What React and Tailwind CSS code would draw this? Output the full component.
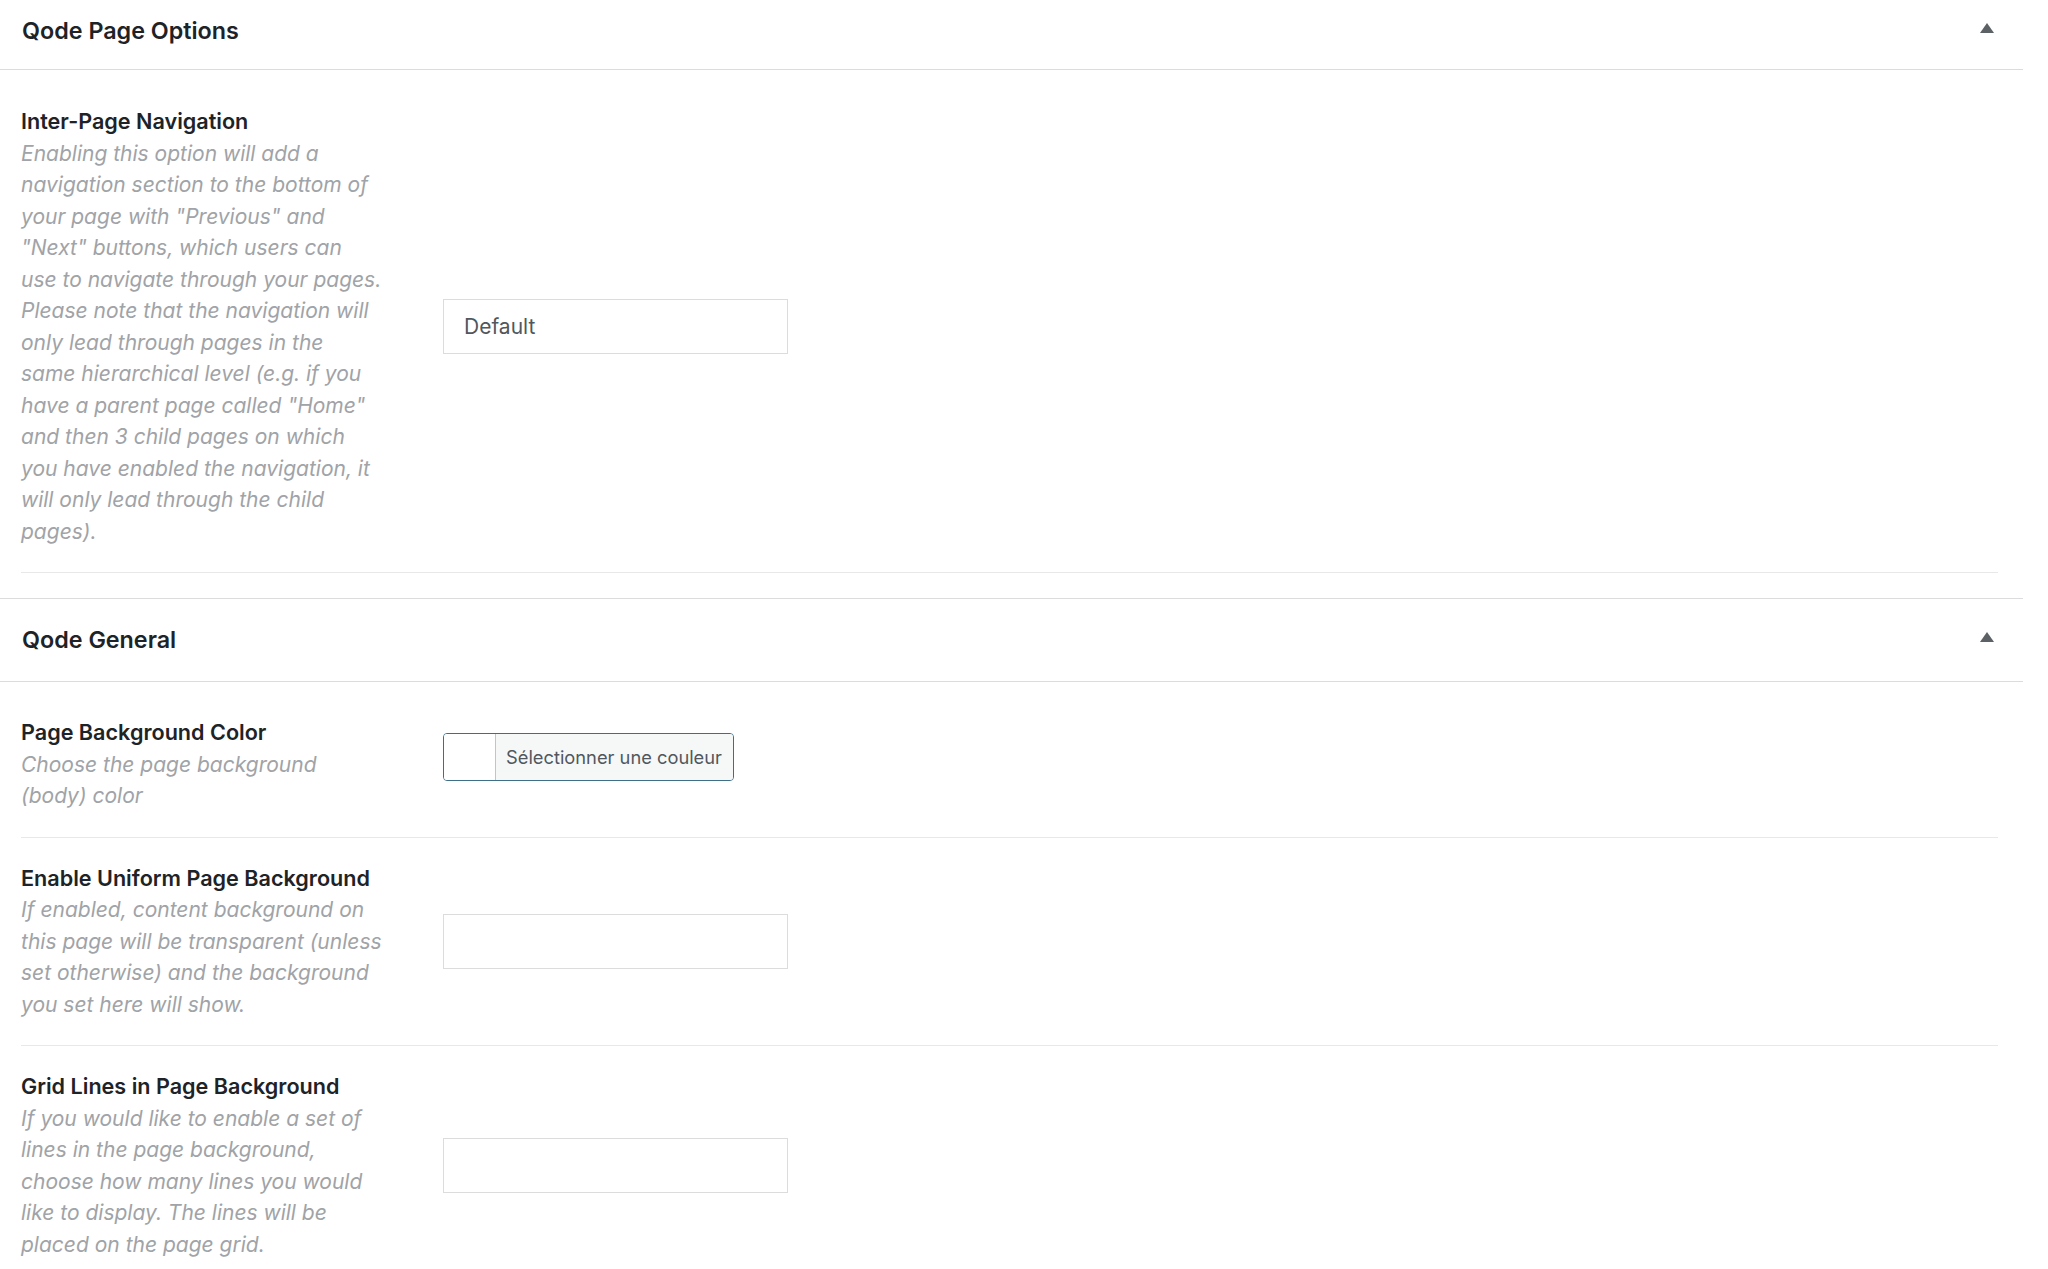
import React from "react"

const font = { fontFamily: "Inter, 'Noto Sans', sans-serif" }

const Caret = () => (
  <svg width="14" height="10" viewBox="0 0 14 10" className="block">
    <polygon points="7,0 14,10 0,10" fill="#5c6166" />
  </svg>
)

const SectionHeader = ({ title, className }) => (
  <div className={`flex items-center justify-between border-b border-[#dcdcde] pl-[22px] pr-[29px] ${className}`}>
    <h2 className="text-[23.3px] font-semibold text-[#1d2327] leading-none">{title}</h2>
    <div className="-mt-[6px]">
      <Caret />
    </div>
  </div>
)

// lines are kept as in the original wrap of the 380px description column
const Field = ({ label, lines, children, last }) => (
  <div className={`flex items-center py-[25px] ${last ? "" : "border-b border-[#e8e8e8]"}`}>
    <div className="w-[422px] shrink-0">
      <div className="text-[21.6px] leading-[31.5px] font-semibold text-[#1d2327]">{label}</div>
      <p className="text-[21px] leading-[31.5px] italic text-[#a0a3a7]">
        {lines.map((l, i) => (
          <span key={i} className="block whitespace-nowrap">{l}</span>
        ))}
      </p>
    </div>
    <div>{children}</div>
  </div>
)

const TextBox = ({ value }) => (
  <div className="w-[345px] h-[55px] border border-[#dcdcde] bg-white flex items-center pl-[20px] text-[21px] text-[#50575e]">
    {value}
  </div>
)

const ColorButton = () => (
  <div className="-mt-[14px] flex w-[291px] h-[48px] rounded-[4px] border-[1.5px] border-[#3d6f88] overflow-hidden">
    <div className="w-[52px] bg-white border-r border-[#c3c4c7]" />
    <div className="flex-1 bg-[#f6f7f7] flex items-center pl-[10px] text-[18.3px] text-[#50575e] whitespace-nowrap">
      Sélectionner une couleur
    </div>
  </div>
)

export default function App() {
  return (
    <div className="w-[2023px] bg-white min-h-screen" style={font}>
      <SectionHeader title="Qode Page Options" className="h-[70px] pb-[8px]" />
      <div className="pl-[21px] pr-[25px] pt-[11px] pb-[25px] border-b border-[#dcdcde]">
        <Field
          label="Inter-Page Navigation"
          lines={[
            "Enabling this option will add a",
            "navigation section to the bottom of",
            'your page with "Previous" and',
            '"Next" buttons, which users can',
            "use to navigate through your pages.",
            "Please note that the navigation will",
            "only lead through pages in the",
            "same hierarchical level (e.g. if you",
            'have a parent page called "Home"',
            "and then 3 child pages on which",
            "you have enabled the navigation, it",
            "will only lead through the child",
            "pages).",
          ]}
        >
          <TextBox value="Default" />
        </Field>
      </div>
      <SectionHeader title="Qode General" className="h-[83px]" />
      <div className="pl-[21px] pr-[25px] pt-[10px]">
        <Field label="Page Background Color" lines={["Choose the page background", "(body) color"]}>
          <ColorButton />
        </Field>
        <Field
          label="Enable Uniform Page Background"
          lines={[
            "If enabled, content background on",
            "this page will be transparent (unless",
            "set otherwise) and the background",
            "you set here will show.",
          ]}
        >
          <TextBox value="" />
        </Field>
        <Field
          label="Grid Lines in Page Background"
          lines={[
            "If you would like to enable a set of",
            "lines in the page background,",
            "choose how many lines you would",
            "like to display. The lines will be",
            "placed on the page grid.",
          ]}
          last
        >
          <TextBox value="" />
        </Field>
      </div>
    </div>
  )
}
